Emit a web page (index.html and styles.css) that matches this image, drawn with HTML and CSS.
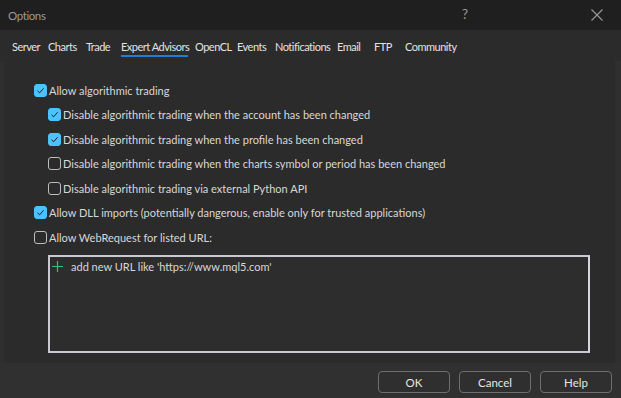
FILE: index.html
```html
<!DOCTYPE html>
<html>
<head>
<meta charset="utf-8">
<link rel="stylesheet" href="styles.css">
</head>
<body>
<div class="window">
  <div class="titlebar">
    <span class="title">Options</span>
    <span class="help-btn">?</span>
    <span class="close-btn">
      <svg width="14" height="14" viewBox="0 0 14 14"><path d="M1.5 1.5 L12.5 12.5 M12.5 1.5 L1.5 12.5" stroke="#9a9a9a" stroke-width="1.1" fill="none"/></svg>
    </span>
  </div>
  <div class="tabs">
    <span class="tab w-server"><span class="tab-text">Server</span></span>
    <span class="tab w-charts"><span class="tab-text">Charts</span></span>
    <span class="tab w-trade"><span class="tab-text">Trade</span></span>
    <span class="tab w-ea"><span class="tab-text active">Expert Advisors</span></span>
    <span class="tab w-opencl"><span class="tab-text">OpenCL</span></span>
    <span class="tab w-events"><span class="tab-text">Events</span></span>
    <span class="tab w-notif"><span class="tab-text">Notifications</span></span>
    <span class="tab w-email"><span class="tab-text">Email</span></span>
    <span class="tab w-ftp"><span class="tab-text">FTP</span></span>
    <span class="tab"><span class="tab-text">Community</span></span>
  </div>
  <div class="panel">
    <div class="row">
      <span class="cb checked"><svg width="13" height="13" viewBox="0 0 13 13"><path d="M3.5 6.8 L5.6 8.8 L9.6 4.3" stroke="#1b1b1b" stroke-width="1" fill="none"/></svg></span>
      <span class="label">Allow algorithmic trading</span>
    </div>
    <div class="row sub">
      <span class="cb checked"><svg width="13" height="13" viewBox="0 0 13 13"><path d="M3.5 6.8 L5.6 8.8 L9.6 4.3" stroke="#1b1b1b" stroke-width="1" fill="none"/></svg></span>
      <span class="label">Disable algorithmic trading when the account has been changed</span>
    </div>
    <div class="row sub">
      <span class="cb checked"><svg width="13" height="13" viewBox="0 0 13 13"><path d="M3.5 6.8 L5.6 8.8 L9.6 4.3" stroke="#1b1b1b" stroke-width="1" fill="none"/></svg></span>
      <span class="label">Disable algorithmic trading when the profile has been changed</span>
    </div>
    <div class="row sub">
      <span class="cb"></span>
      <span class="label">Disable algorithmic trading when the charts symbol or period has been changed</span>
    </div>
    <div class="row sub">
      <span class="cb"></span>
      <span class="label">Disable algorithmic trading via external Python API</span>
    </div>
    <div class="row">
      <span class="cb checked"><svg width="13" height="13" viewBox="0 0 13 13"><path d="M3.5 6.8 L5.6 8.8 L9.6 4.3" stroke="#1b1b1b" stroke-width="1" fill="none"/></svg></span>
      <span class="label">Allow DLL imports (potentially dangerous, enable only for trusted applications)</span>
    </div>
    <div class="row">
      <span class="cb"></span>
      <span class="label">Allow WebRequest for listed URL:</span>
    </div>
    <div class="listbox">
      <div class="list-item">
        <svg class="plus" width="11" height="11" viewBox="0 0 11 11"><path d="M5.5 0 V11 M0 5.5 H11" stroke="#2ec27e" stroke-width="1.2" fill="none"/></svg>
        <span class="label">add new URL like 'https://www.mql5.com'</span>
      </div>
    </div>
  </div>
  <div class="footer">
    <button class="btn">OK</button>
    <button class="btn">Cancel</button>
    <button class="btn">Help</button>
  </div>
</div>
</body>
</html>
```
FILE: styles.css
```css
* { box-sizing: border-box; }
html, body {
  margin: 0;
  padding: 0;
  background: #2b2b2b;
  width: 621px;
  height: 398px;
  overflow: hidden;
  font-family: "Lato", "Noto Sans", sans-serif;
  font-size: 11px;
}
.window {
  width: 621px;
  height: 398px;
  display: flex;
  flex-direction: column;
  background: #2f2f2f;
}
.titlebar {
  height: 30px;
  background: #1f1f1f;
  display: flex;
  align-items: center;
  position: relative;
  color: #9a9a9a;
}
.title {
  margin-left: 8px;
  font-size: 11.5px;
  letter-spacing: -0.4px;
}
.help-btn {
  position: absolute;
  left: 462px;
  top: 6px;
  font-size: 13.5px;
}
.close-btn {
  position: absolute;
  left: 590px;
  top: 8px;
  width: 14px;
  height: 14px;
}
.tabs {
  height: 31px;
  background: #2b2b2b;
  display: flex;
  align-items: center;
  color: #e2e2e2;
  padding-left: 12px;
  padding-top: 2px;
  font-size: 11px;
}
.tab {
  flex: none;
  white-space: nowrap;
}
.tab-text {
  position: relative;
  display: inline-block;
  letter-spacing: -0.5px;
}
.w-server { width: 36px; }
.w-charts { width: 38px; }
.w-trade { width: 35px; }
.w-ea { width: 74px; }
.w-opencl { width: 42px; }
.w-events { width: 38px; }
.w-notif { width: 62px; }
.w-email { width: 37px; }
.w-ftp { width: 31px; }
.tab-text.active::after {
  content: "";
  position: absolute;
  left: 0;
  right: 1px;
  bottom: -4px;
  height: 2px;
  background: #1f7fd4;
}
.panel {
  height: 302px;
  margin: 0 6px 0 4px;
  background: #2b2b2b;
  padding-top: 17px;
  padding-left: 30px;
}
.row {
  height: 24.5px;
  display: flex;
  align-items: center;
  color: #d8d8d8;
}
.row.sub { padding-left: 14px; }
.label {
  white-space: nowrap;
  margin-left: 2px;
}
.cb {
  width: 13px;
  height: 13px;
  border: 1px solid #bdbdbd;
  border-radius: 3px;
  flex: none;
  display: flex;
}
.cb.checked {
  background: #4cc2ff;
  border-color: #4cc2ff;
}
.cb svg { margin: -1px; }
.listbox {
  margin-top: 5px;
  margin-left: 14px;
  width: 542px;
  height: 98px;
  border: 2px solid #c9c9d2;
  border-right-color: #d6d6de;
  background: #2d2d2d;
  padding: 1px 0 0 2px;
}
.list-item {
  display: flex;
  align-items: center;
  height: 18px;
  color: #d8d8d8;
}
.plus { margin-right: 6px; flex: none; }
.footer {
  flex: 1;
  display: flex;
  justify-content: flex-end;
  align-items: flex-start;
  gap: 9px;
  padding-top: 8px;
  padding-right: 9px;
  background: #303030;
}
.btn {
  width: 72px;
  height: 22px;
  border: 1px solid #6e6e6e;
  border-radius: 4px;
  background: #2f2f2f;
  color: #e6e6e6;
  font-family: "Lato", "Noto Sans", sans-serif;
  font-size: 11.5px;
  padding: 0;
}
```
